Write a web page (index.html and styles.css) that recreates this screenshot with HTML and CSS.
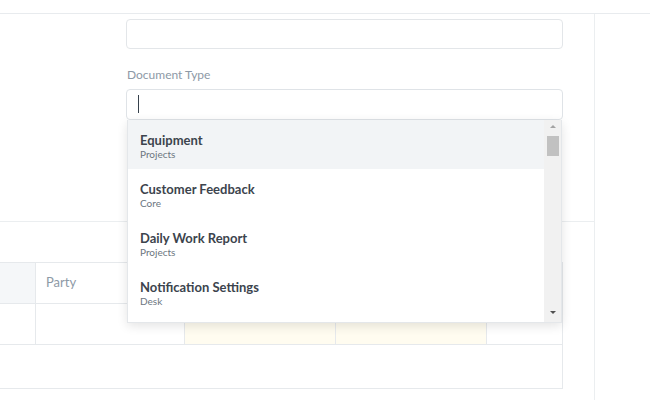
FILE: index.html
```html
<!DOCTYPE html>
<html>
<head>
<meta charset="utf-8">
<link rel="stylesheet" href="styles.css">
</head>
<body>
<div class="topbar"></div>
<div class="page">
  <div class="main">
    <div class="form-section">
      <div class="control"></div>
      <div class="label">Document Type</div>
      <div class="field">
        <div class="control focused"><span class="caret"></span></div>
        <div class="dropdown">
          <ul class="list">
            <li class="item active"><div class="name">Equipment</div><div class="sub">Projects</div></li>
            <li class="item"><div class="name">Customer Feedback</div><div class="sub">Core</div></li>
            <li class="item"><div class="name">Daily Work Report</div><div class="sub">Projects</div></li>
            <li class="item"><div class="name">Notification Settings</div><div class="sub">Desk</div></li>
          </ul>
          <div class="scrollbar">
            <span class="arrow up"></span>
            <span class="thumb"></span>
            <span class="track"></span>
            <span class="arrow down"></span>
          </div>
        </div>
      </div>
    </div>
    <div class="table-section">
      <div class="grid">
        <div class="row head">
          <div class="cell idx"></div>
          <div class="cell">Party</div>
          <div class="cell"></div>
          <div class="cell"></div>
          <div class="cell last"></div>
        </div>
        <div class="row body">
          <div class="cell idx"></div>
          <div class="cell"></div>
          <div class="cell warm"></div>
          <div class="cell warm"></div>
          <div class="cell last"></div>
        </div>
        <div class="row foot"></div>
      </div>
    </div>
  </div>
  <div class="side"></div>
</div>
</body>
</html>
```

FILE: styles.css
```css
* { box-sizing: border-box; }
html, body { margin: 0; padding: 0; background: #fff; }
body {
  font-family: Lato, "Open Sans", "Liberation Sans", sans-serif;
  color: #36414c;
  width: 650px;
  height: 400px;
  overflow: hidden;
}
.topbar {
  height: 14px;
  border-bottom: 1px solid #e8ebee;
}
.page {
  display: flex;
  height: 386px;
}
.main {
  width: 595px;
  border-right: 1px solid #ebeef0;
  flex: none;
}
.side { flex: 1; }
.form-section {
  padding: 5px 0 101px 126px;
  border-bottom: 1px solid #ebeef0;
}
.control {
  width: 437px;
  height: 30px;
  border: 1px solid #e3e6e9;
  border-radius: 4px;
  background: #fff;
}
.label {
  margin-top: 18px;
  line-height: 16px;
  font-size: 12px;
  color: #8d99a6;
  padding-left: 1px;
}
.field {
  position: relative;
  margin-top: 6px;
}
.control.focused {
  height: 31px;
  border-color: #dfe3e7;
  padding: 5px 0 0 11px;
}
.caret {
  display: block;
  width: 1px;
  height: 18px;
  background: #36414c;
}
.dropdown {
  position: absolute;
  top: 31px;
  left: 1px;
  width: 435px;
  height: 203px;
  background: #fff;
  border: 1px solid #e4e7ea;
  border-top: none;
  box-shadow: 0 3px 10px rgba(0, 0, 0, 0.11);
  display: flex;
  z-index: 5;
}
.list {
  list-style: none;
  margin: 0;
  padding: 0;
  flex: 1;
  overflow: hidden;
}
.item {
  height: 49px;
  padding: 13px 12px 0 12px;
}
.item.active { background: #f2f4f6; }
.name {
  font-size: 13px;
  font-weight: 700;
  line-height: 15px;
  color: #3c444d;
}
.sub {
  font-size: 10px;
  line-height: 12px;
  color: #6c7680;
}
.scrollbar {
  width: 17px;
  background: #f1f1f1;
  display: flex;
  flex-direction: column;
  align-items: center;
  padding-top: 5px;
}
.arrow {
  width: 0;
  height: 0;
  border-left: 3px solid transparent;
  border-right: 3px solid transparent;
}
.arrow.up { border-bottom: 3px solid #a3a3a3; }
.arrow.down { border-top: 3px solid #505050; margin-bottom: 8px; }
.thumb {
  width: 12px;
  height: 20px;
  background: #c1c1c1;
  margin-top: 8px;
}
.track { flex: 1; }
.table-section {
  padding-top: 40px;
}
.grid {
  width: 563px;
  border-top: 1px solid #e6e9ec;
  border-right: 1px solid #e6e9ec;
}
.row {
  display: grid;
  grid-template-columns: 36px 149px 151px 151px 1fr;
  border-bottom: 1px solid #e6e9ec;
}
.row.head { height: 41px; }
.row.body { height: 41px; }
.row.foot { display: block; height: 44px; }
.cell {
  border-right: 1px solid #e6e9ec;
  padding: 11px 10px 0 10px;
  font-size: 13px;
  line-height: 16px;
  color: #8d99a6;
}
.cell.last { border-right: none; }
.head .idx { background: #f5f7f9; }
.warm { background: #fffcf0; }
```
